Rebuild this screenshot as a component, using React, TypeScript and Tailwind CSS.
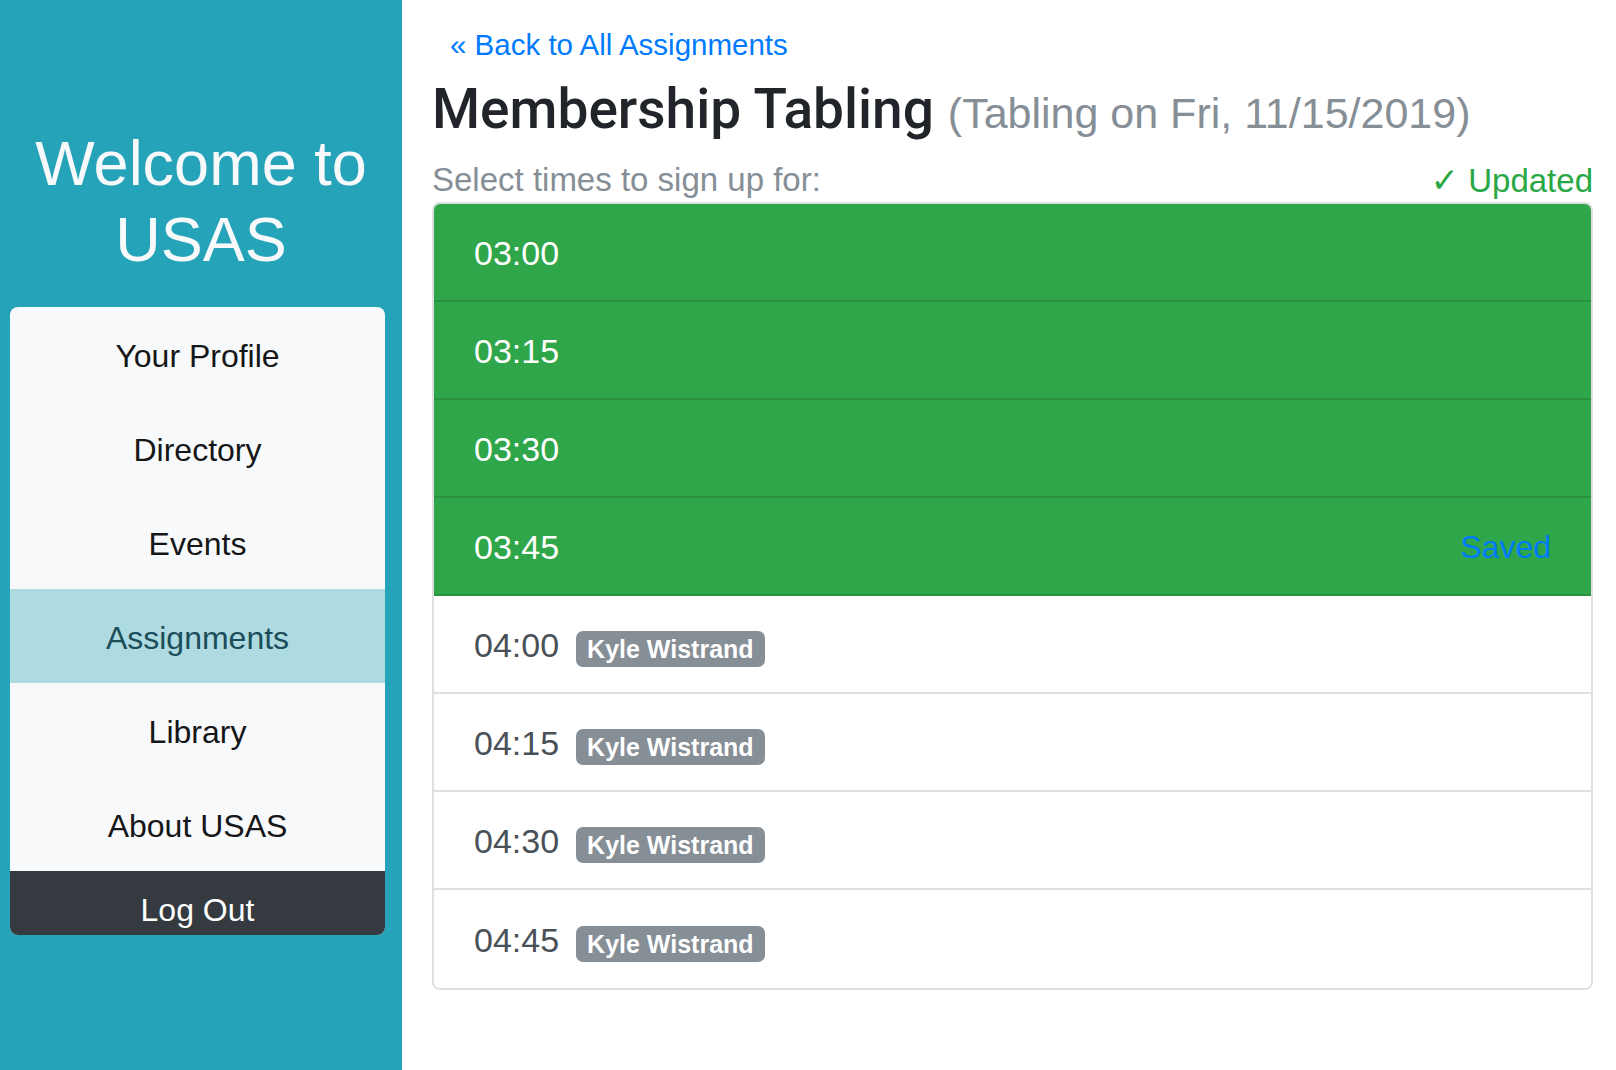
import React from "react";

const navItems = ["Your Profile", "Directory", "Events", "Assignments", "Library", "About USAS"];

type Slot = { time: string; mine: boolean; saved?: boolean };

const slots: Slot[] = [
  { time: "03:00", mine: true },
  { time: "03:15", mine: true },
  { time: "03:30", mine: true },
  { time: "03:45", mine: true, saved: true },
  { time: "04:00", mine: false },
  { time: "04:15", mine: false },
  { time: "04:30", mine: false },
  { time: "04:45", mine: false },
];

export default function App() {
  return (
    <div className="flex min-h-screen w-full bg-white font-['Liberation_Sans',Arial,sans-serif]">
      <aside className="w-[402px] shrink-0 bg-[#24a3b9] pt-[125px]">
        <h1 className="text-center text-[63px] leading-[76px] font-normal text-[#f8f9fa]">
          Welcome to
          <br />
          USAS
        </h1>
        <nav className="mt-[30px] ml-[10px] h-[628px] w-[375px] overflow-hidden rounded-[8px] bg-[#f8f9fa]">
          {navItems.map((item) => (
            <div
              key={item}
              className={
                item === "Assignments"
                  ? "h-[94px] bg-[#aedae2] pt-[25px] text-center text-[32px] leading-[48px] text-[#1b4e58]"
                  : "h-[94px] pt-[25px] text-center text-[32px] leading-[48px] text-[#151618]"
              }
            >
              {item}
            </div>
          ))}
          <div className="h-[94px] bg-[#343a40] pt-[15px] text-center text-[32px] leading-[48px] text-white">
            Log Out
          </div>
        </nav>
      </aside>

      <main className="flex-1 pl-[30px] pr-[23px] pt-[22px]">
        <a className="ml-[18px] block text-[29.5px] leading-[45px] text-[#007bff]">« Back to All Assignments</a>
        <div className="mt-[9px] flex items-baseline whitespace-nowrap">
          <h2 className="font-['Roboto',Arial,sans-serif] text-[55px] leading-[67px] font-medium text-[#212529]">
            Membership Tabling
          </h2>
          <span className="ml-[14px] text-[43px] leading-[50px] text-[#868e96]">(Tabling on Fri, 11/15/2019)</span>
        </div>
        <div className="mt-[11px] flex h-[48px] items-center justify-between text-[33px] leading-[48px]">
          <span className="translate-y-[2px] text-[#868e96]">Select times to sign up for:</span>
          <span className="translate-y-[2px] text-[#28a745]">
            <span className="font-['DejaVu_Sans',sans-serif] text-[34px]">✓</span> Updated
          </span>
        </div>
        <div className="overflow-hidden rounded-[8px] border-2 border-[rgba(0,0,0,0.125)]">
          {slots.map((s, i) => (
            <div
              key={s.time}
              className={
                (s.mine ? "bg-[#2fa64a] text-white " : "bg-white text-[#495057] ") +
                (i < slots.length - 1 ? "border-b-2 border-[rgba(0,0,0,0.125)] " : "") +
                "flex h-[98px] items-center justify-between px-[40px] pt-[2px] text-[34px] leading-[48px]"
              }
            >
              <div className="flex items-baseline">
                <span>{s.time}</span>
                {!s.mine && (
                  <span className="ml-[17px] inline-block translate-y-[1px] rounded-[7px] bg-[#868e96] px-[11px] py-[5px] text-[25px] leading-[26px] font-bold text-white">
                    Kyle Wistrand
                  </span>
                )}
              </div>
              {s.saved && <span className="text-[32px] text-[#007bff]">Saved</span>}
            </div>
          ))}
        </div>
      </main>
    </div>
  );
}
